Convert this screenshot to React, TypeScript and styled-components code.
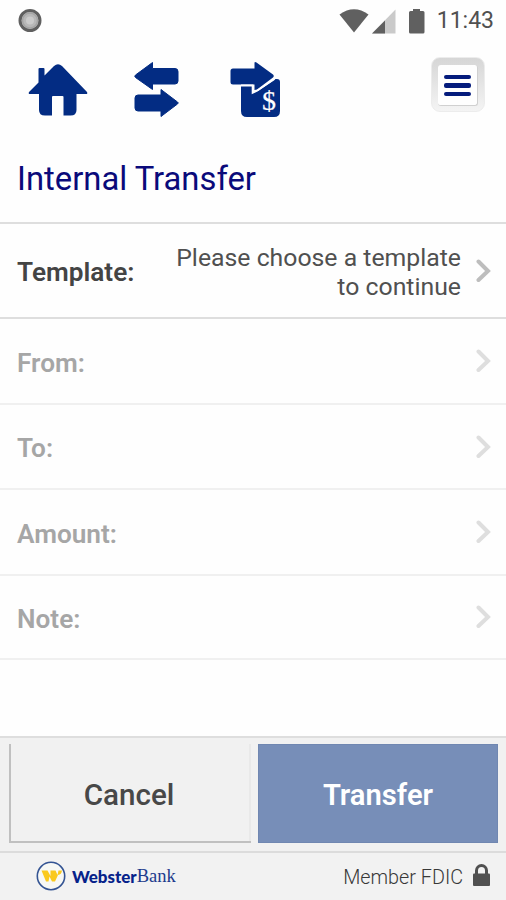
import React from "react";
import styled, { createGlobalStyle } from "styled-components";

const GlobalStyle = createGlobalStyle`
  * { box-sizing: border-box; }
  body { margin: 0; background: #fefefe; font-family: Roboto, "Liberation Sans", sans-serif; }
`;

const Screen = styled.div`
  width: 506px;
  height: 900px;
  display: flex;
  flex-direction: column;
  background: #fefefe;
  color: #444;
  overflow: hidden;
`;

const StatusBar = styled.header`
  height: 42px;
  display: flex;
  align-items: center;
  justify-content: space-between;
  padding: 0 12px 0 18px;
`;

const StatusGroup = styled.div`
  display: flex;
  align-items: center;
`;

const Clock = styled.span`
  font-size: 23px;
  line-height: 44px;
  color: #505050;
  margin-left: 12px;
`;

const Toolbar = styled.nav`
  height: 92px;
  display: flex;
  align-items: flex-start;
  padding: 13px 21px 0 26px;
`;

const ToolButton = styled.button<{ $gap?: number }>`
  display: block;
  padding: 0;
  border: 0;
  background: none;
  margin-left: ${(p) => p.$gap ?? 0}px;
  svg { display: block; }
`;

const MenuButton = styled.button`
  width: 54px;
  height: 55px;
  margin: 2px 0 0 auto;
  padding: 7px 6px 5px;
  border: 1px solid #ececec;
  border-radius: 9px;
  background: linear-gradient(#d6d6d6, #e5e5e5 50%, #f4f4f4);
`;

const MenuFace = styled.span`
  height: 100%;
  display: flex;
  flex-direction: column;
  justify-content: center;
  align-items: center;
  gap: 4px;
  padding-top: 1px;
  border-radius: 3px;
  border: 1px solid #d0d0d0;
  border-width: 0 1px 1px 0;
  background: #fefefe;
`;

const MenuLine = styled.span`
  width: 27px;
  height: 4.5px;
  border-radius: 2px;
  background: #041b7c;
`;

const Title = styled.h1`
  height: 88px;
  margin: 0;
  padding: 1px 17px 0;
  font-size: 32.8px;
  font-weight: 400;
  line-height: 88px;
  color: #0a0a7a;
`;

const Row = styled.button<{ $height: number; $disabled?: boolean }>`
  height: ${(p) => p.$height}px;
  flex: none;
  display: flex;
  align-items: center;
  padding: 3px 14px 0 17px;
  border: 0;
  border-bottom: 2px solid ${(p) => (p.$disabled ? "#f0f0f0" : "#dedede")};
  background: none;
  font-family: inherit;
  text-align: left;
  color: ${(p) => (p.$disabled ? "#a6a6a6" : "#444")};
  svg { margin-bottom: 3px; }
`;

const Form = styled.main`
  flex: 1;
  display: flex;
  flex-direction: column;
  border-top: 2px solid #dedede;
`;

const Label = styled.span`
  font-size: 26.2px;
  font-weight: 600;
`;

const Value = styled.span`
  flex: 1;
  padding-right: 15px;
  font-size: 24.8px;
  font-weight: 400;
  line-height: 29px;
  text-align: right;
  color: #505050;
`;

const Actions = styled.div`
  height: 115px;
  display: flex;
  gap: 7px;
  padding: 6px 8px 8px 9px;
  border-top: 2px solid #dedede;
  background: #f1f1f1;
`;

const ActionButton = styled.button<{ $primary?: boolean }>`
  width: ${(p) => (p.$primary ? 240 : 242)}px;
  height: 99px;
  padding: ${(p) => (p.$primary ? "3px 0 0" : "4px 4px 0 0")};
  border: solid ${(p) => (p.$primary ? "#7087b1" : "#c0c0c0")};
  border-width: ${(p) => (p.$primary ? "1px" : "0 0 2px 2px")};
  box-shadow: ${(p) => (p.$primary ? "none" : "inset -2px 0 #e9e9e9")};
  background: ${(p) => (p.$primary ? "#778eb8" : "#f1f1f1")};
  color: ${(p) => (p.$primary ? "#fff" : "#484848")};
  font-family: inherit;
  font-size: ${(p) => (p.$primary ? 29.2 : 29.6)}px;
  font-weight: ${(p) => (p.$primary ? 600 : 500)};
`;

const Footer = styled.footer`
  height: 49px;
  display: flex;
  align-items: center;
  justify-content: space-between;
  padding: 0 15px 2px 36px;
  border-top: 2px solid #dcdcdc;
  background: #f2f2f2;
`;

const Brand = styled.div`
  display: flex;
  align-items: center;
`;

const BrandSans = styled.span`
  margin: 1px 0 0 6px;
  font-family: Lato, sans-serif;
  font-size: 16.9px;
  font-weight: 900;
  color: #06228a;
`;

const BrandSerif = styled.span`
  margin-top: 1px;
  font-family: "Liberation Serif", serif;
  font-size: 18.5px;
  color: #1d3b8d;
`;

const Member = styled.div`
  display: flex;
  align-items: center;
  gap: 9px;
  padding-top: 3px;
  font-size: 19.8px;
  font-weight: 300;
  color: #383838;
  svg { margin-bottom: 4px; }
`;

const Chevron = ({ color }: { color: string }) => (
  <svg width="16" height="24" viewBox="0 0 16 24" fill="none" stroke={color} strokeWidth="4" strokeLinecap="round">
    <path d="M2.5 2.5 12 12l-9.5 9" />
  </svg>
);

const HomeIcon = () => (
  <svg width="64" height="64" viewBox="26 55 64 64" fill="#032c83">
    <path d="M29 92 38.500 82.500V69q0-1 1-1h4q1 0 1 1v6.500l9.500-9.500q4-3.500 8 0l25 26q1 2-1 2h-9.500v16q0 5.500-6 5.500h-7V97q0-1-1-1H53q-1 0-1 1v18.500h-7q-6 0-6-5.500V94H30q-2 0-1-2Z" />
  </svg>
);

const SwapIcon = () => (
  <svg width="48" height="66" viewBox="132 55 48 66" fill="#032c83" stroke="#032c83" strokeWidth="1" strokeLinejoin="round">
    <path d="M135.500 75 152.500 62.500V68.500H175q3 0 3 3v9.500q0 3-3 3h-22.500v5.500L135.500 77.500q-1.500-1.200 0-2.500ZM177.500 102 161 89.500V95H138q-3 0-3 3v10q0 3 3 3h23v5.500l16.500-12.500q1.500-1.200 0-2Z" />
  </svg>
);

const DollarText = styled.text`
  font-family: "Liberation Serif", serif;
  font-size: 28px;
  fill: #fff;
  stroke: #fff;
  stroke-width: 0.2px;
`;

const PayIcon = () => (
  <svg width="56" height="66" viewBox="227 55 56 66" fill="#032c83">
    <path d="M241 86.500H252.500V92.500L258 91 275.500 79H277q3 0 3 3v29q0 6-6 6H247q-6 0-6-6Z" />
    <path d="M233 68.500H254.500V62.500q.5-1 2 0L273 74.500q1.500 1.500 0 3L257 89.500l-2.500.5V84.500H233q-2.500 0-2.500-2.500V71q0-2.500 2.500-2.500Z" />
    <path d="M241 85.300H252.500V93l5-2.500L274.500 79" fill="none" stroke="#fff" strokeWidth="1.600" />
    <DollarText x="262" y="109.500">$</DollarText>
  </svg>
);

const LogoMark = () => (
  <svg width="30" height="30" viewBox="0 0 30 30">
    <circle cx="15" cy="15" r="13.700" fill="#f7f8f5" stroke="#345493" strokeWidth="1.600" />
    <path d="M5.500 9.500h6l3 5.500 0-5.500h5l2 4.500 1-4.500H26q-.5 4-4 4.500l-3 6.500h-3l-2.500-5-1 5H10Z" fill="#fac91e" />
  </svg>
);

const fields = [
  { name: "From:", height: 86 },
  { name: "To:", height: 85 },
  { name: "Amount:", height: 86 },
  { name: "Note:", height: 84 },
];

export default function App() {
  return (
    <Screen>
      <GlobalStyle />
      <StatusBar>
        <svg width="24" height="24" viewBox="0 0 24 24">
          <circle cx="12" cy="11.500" r="10" fill="#bcbcbc" stroke="#606060" strokeWidth="3" />
          <circle cx="12" cy="11.500" r="7.500" fill="#b8b8b8" stroke="#a5a5a5" strokeWidth="1.500" />
          <circle cx="12" cy="11.500" r="4" fill="#cbcbcb" />
        </svg>
        <StatusGroup>
          <svg width="86" height="26" viewBox="338 7 86 26" fill="#606060">
            <path d="M338.500 13.500Q353 3 367.500 13.500L353 31.500Z" />
            <path d="M394.500 8.500V32.500H371Z" fill="#cacaca" />
            <path d="M384 19.500V32.500H371Z" />
            <path d="M412 8h7v2h3q1.500 0 1.500 1.500V31q0 1.500-1.500 1.500h-12.500q-1.500 0-1.500-1.500V11.500q0-1.500 1.500-1.500h2.500Z" />
          </svg>
          <Clock>11:43</Clock>
        </StatusGroup>
      </StatusBar>
      <Toolbar>
        <ToolButton aria-label="Home"><HomeIcon /></ToolButton>
        <ToolButton $gap={42} aria-label="Transfers"><SwapIcon /></ToolButton>
        <ToolButton $gap={47} aria-label="Payments"><PayIcon /></ToolButton>
        <MenuButton aria-label="Menu">
          <MenuFace><MenuLine /><MenuLine /><MenuLine /></MenuFace>
        </MenuButton>
      </Toolbar>
      <Title>Internal Transfer</Title>
      <Form>
        <Row $height={95}>
          <Label>Template:</Label>
          <Value>Please choose a template<br />to continue</Value>
          <Chevron color="#bdbdbd" />
        </Row>
        {fields.map(({ name, height }) => (
          <Row key={name} $height={height} $disabled>
            <Label>{name}</Label>
            <Value />
            <Chevron color="#dedede" />
          </Row>
        ))}
      </Form>
      <Actions>
        <ActionButton>Cancel</ActionButton>
        <ActionButton $primary>Transfer</ActionButton>
      </Actions>
      <Footer>
        <Brand>
          <LogoMark />
          <BrandSans>Webster</BrandSans>
          <BrandSerif>Bank</BrandSerif>
        </Brand>
        <Member>
          Member FDIC
          <svg width="19" height="24" viewBox="0 0 19 24">
            <path d="M4.500 11V7.500a5 5 0 0 1 10 0V11" fill="none" stroke="#505050" strokeWidth="3" />
            <rect x="1" y="10.500" width="17" height="12.500" rx="1" fill="#505050" />
          </svg>
        </Member>
      </Footer>
    </Screen>
  );
}
